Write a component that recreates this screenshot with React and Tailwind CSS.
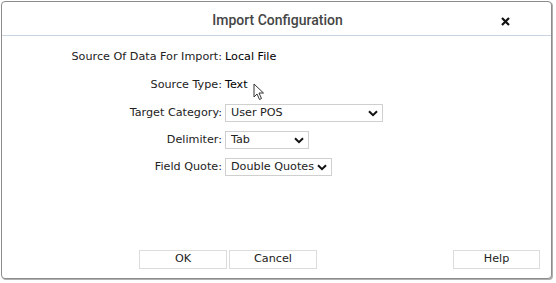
import React from 'react';

const bodyFont = { fontFamily: '"DejaVu Sans", Verdana, sans-serif' };

function Chevron() {
    return (
        <svg width="10" height="7" viewBox="0 0 10 7" className="shrink-0">
            <path d="M1 1.2 L5 5.2 L9 1.2" fill="none" stroke="#111" strokeWidth="2" />
        </svg>
    );
}

function Select({ value, width }) {
    return (
        <div className={`flex items-center justify-between gap-[3px] h-[18px] border border-[#cfcfcf] bg-white pl-[5px] pr-[4px] ${width}`}>
            <span className="text-[#222] whitespace-nowrap">{value}</span>
            <Chevron />
        </div>
    );
}

function Row({ label, children, className }) {
    return (
        <div className={`flex items-center ${className}`}>
            <div className="w-[151px] text-right whitespace-nowrap text-[#222]">{label}</div>
            <div className="ml-[3px] flex items-center">{children}</div>
        </div>
    );
}

function Button({ children, width }) {
    return (
        <button className={`h-[19px] ${width} border border-[#dcdcdc] bg-white text-[#222] flex items-center justify-center`}>
            {children}
        </button>
    );
}

export default function App() {
    return (
        <div className="w-[556px] h-[283px] bg-white pl-[1px] pt-[1px]">
            <div className="relative w-[551px] h-[278px] border border-[#8c8c8c] rounded-[4px] shadow-[1px_1px_0_#b0b0b0] flex flex-col bg-white">
                <div className="h-[34px] border-b border-[#c9d5e2] flex items-center justify-center relative shrink-0">
                    <span className="text-[14px] font-medium text-[#454545] mt-[3px] ml-[2px]" style={{ fontFamily: 'Roboto, sans-serif' }}>Import Configuration</span>
                    <svg width="9" height="9" viewBox="0 0 9 9" className="absolute left-[499px] top-[15px]">
                        <path d="M1 1 L8 8 M8 1 L1 8" stroke="#111" strokeWidth="2.2" />
                    </svg>
                </div>
                <div className="flex-1 text-[11.2px] pl-[69px] flex flex-col" style={bodyFont}>
                    <Row label="Source Of Data For Import:" className="mt-[12px] h-[18px]">Local File</Row>
                    <Row label="Source Type:" className="mt-[10px] h-[18px]">Text</Row>
                    <Row label="Target Category:" className="mt-[10px] h-[18px]">
                        <Select value="User POS" width="w-[158px]" />
                    </Row>
                    <Row label="Delimiter:" className="mt-[9px] h-[18px]">
                        <Select value="Tab" width="w-[84px]" />
                    </Row>
                    <Row label="Field Quote:" className="mt-[9px] h-[18px]">
                        <Select value="Double Quotes" width="w-[107px]" />
                    </Row>
                    <div className="mt-auto mb-[9px] flex items-center">
                        <div className="ml-[68px] flex gap-[2px]">
                            <Button width="w-[88px]">OK</Button>
                            <Button width="w-[88px]">Cancel</Button>
                        </div>
                        <div className="ml-[136px]">
                            <Button width="w-[87px]">Help</Button>
                        </div>
                    </div>
                </div>
                <svg width="12" height="18" viewBox="0 0 12 18" className="absolute left-[251px] top-[81px]">
                    <path d="M1 1 L1 14 L4 11 L6.5 16.5 L8.5 15.5 L6 10 L10.5 10 Z" fill="#fff" stroke="#333" strokeWidth="1" strokeLinejoin="round" />
                </svg>
            </div>
        </div>
    );
}
